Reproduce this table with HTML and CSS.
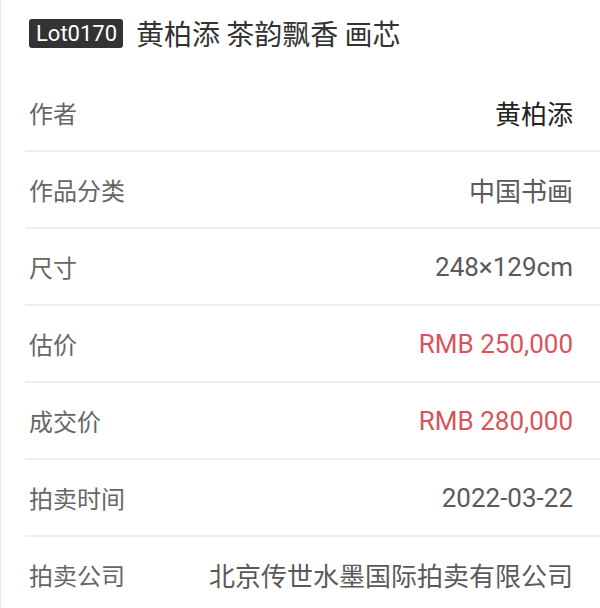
FILE: index.html
```html
<!DOCTYPE html>
<html lang="zh-CN">
<head>
<meta charset="utf-8">
<link rel="stylesheet" href="styles.css">
</head>
<body>
<div class="page">
  <header class="head">
    <span class="lot">Lot0170</span>
    <h1 class="title">黄柏添 茶韵飘香 画芯</h1>
  </header>
  <ul class="list">
    <li class="row"><span class="label">作者</span><span class="value dark">黄柏添</span></li>
    <li class="row"><span class="label">作品分类</span><span class="value">中国书画</span></li>
    <li class="row"><span class="label">尺寸</span><span class="value">248×129cm</span></li>
    <li class="row"><span class="label">估价</span><span class="value red">RMB 250,000</span></li>
    <li class="row"><span class="label">成交价</span><span class="value red">RMB 280,000</span></li>
    <li class="row"><span class="label">拍卖时间</span><span class="value">2022-03-22</span></li>
    <li class="row"><span class="label">拍卖公司</span><span class="value">北京传世水墨国际拍卖有限公司</span></li>
  </ul>
</div>
</body>
</html>
```

FILE: styles.css
```css
* { box-sizing: border-box; }
html, body { margin: 0; padding: 0; background: #fff; }
body {
  font-family: Roboto, "Noto Sans CJK SC", sans-serif;
  width: 600px;
  height: 608px;
  overflow: hidden;
}
.page {
  border-left: 1px solid #e8e8e8;
  min-height: 608px;
}
.head {
  height: 75px;
  display: flex;
  align-items: flex-start;
  padding: 19px 0 0 28px;
  gap: 13px;
}
.lot {
  background: #333;
  color: #fff;
  font-size: 22px;
  line-height: 29px;
  height: 29px;
  padding: 0 6px 0 7px;
  border-radius: 3px;
}
.title {
  margin: 0;
  font-weight: 400;
  font-size: 28px;
  line-height: 29px;
  color: #333;
  font-family: "Noto Sans CJK SC", sans-serif;
}
.list {
  list-style: none;
  margin: 0;
  padding: 0 0 0 24px;
}
.row {
  height: 77px;
  display: flex;
  align-items: center;
  justify-content: space-between;
  padding: 0 27px 0 4px;
  border-bottom: 2px solid #ededed;
}
.label {
  font-size: 24px;
  color: #666;
  font-family: "Noto Sans CJK SC", sans-serif;
}
.value {
  font-size: 26px;
  color: #5a5a5a;
  font-family: Roboto, "Noto Sans CJK SC", sans-serif;
}
.value.dark { color: #222; }
.value.red { color: #d9545a; }
```
